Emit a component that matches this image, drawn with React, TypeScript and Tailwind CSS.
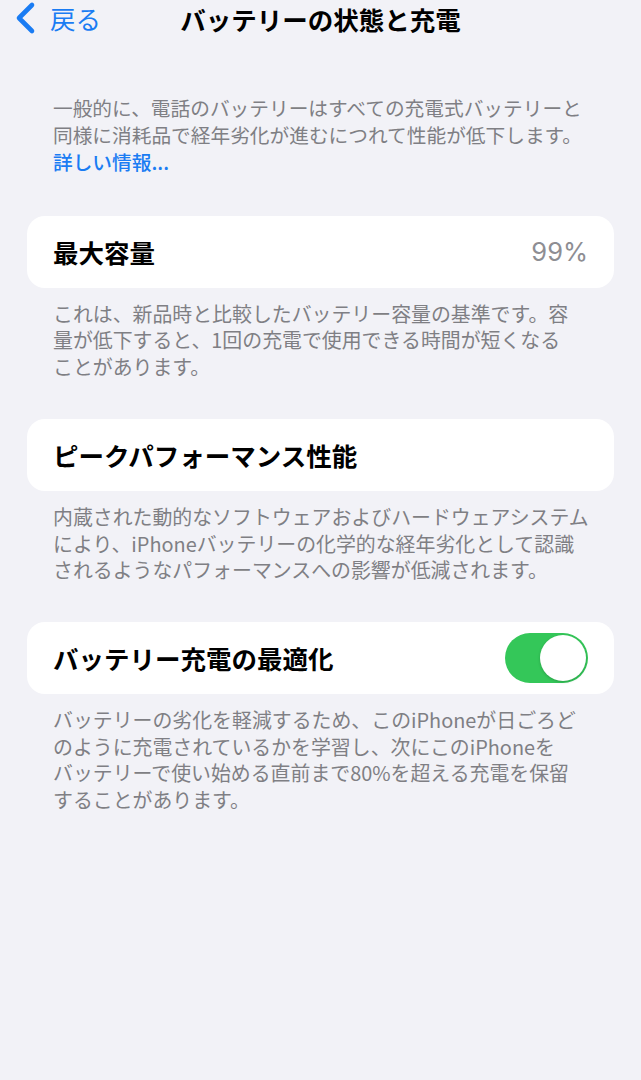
import React, { useState } from 'react';

const FONT = '"Noto Sans CJK JP", "Noto Sans", sans-serif';

interface SectionProps {
    title: string;
    footer: string[];
    right?: React.ReactNode;
}

const Toggle: React.FC<{ on: boolean; onChange: () => void }> = ({ on, onChange }) => (
    <button
        onClick={onChange}
        className={`w-[83px] h-[50px] rounded-full p-[2px] flex items-center ${on ? 'bg-[#34c759] justify-end' : 'bg-[#e5e5ea] justify-start'}`}
    >
        <span className="block w-[46px] h-[46px] rounded-full bg-white shadow-[0_1px_3px_rgba(0,0,0,0.2)]" />
    </button>
);

const Section: React.FC<SectionProps> = ({ title, footer, right }) => (
    <div className="mx-[27px]">
        <div className="h-[72px] bg-white rounded-[18px] pl-[26px] pr-[26px] flex items-center justify-between">
            <span className="text-[25.5px] font-bold text-black">{title}</span>
            {right}
        </div>
        <div className="mt-[13px] px-[26px] text-[19.9px] leading-[26.4px] text-[#7f7f84]">
            {footer.map((line) => (
                <div key={line} className="whitespace-nowrap">{line}</div>
            ))}
        </div>
    </div>
);

export default function App() {
    const [optimized, setOptimized] = useState(true);

    return (
        <div className="w-[641px] h-[1080px] bg-[#f2f2f7] overflow-hidden" style={{ fontFamily: FONT }}>
            {/* navigation bar */}
            <div className="relative h-[38px] flex items-center justify-center">
                <div className="absolute left-[13px] top-[1px] flex items-center gap-[13px] text-[#1a7cf3]">
                    <svg width="24" height="34" viewBox="0 0 24 34" fill="none">
                        <path d="M19 4L6 17L19 30" stroke="currentColor" strokeWidth="4.6" strokeLinecap="round" strokeLinejoin="round" />
                    </svg>
                    <span className="text-[25.5px] leading-none">戻る</span>
                </div>
                <h1 className="text-[25.5px] font-bold text-black">バッテリーの状態と充電</h1>
            </div>

            <div className="mt-[56px] px-[53px] text-[19.7px] leading-[27px] text-[#7f7f84]">
                <div className="whitespace-nowrap">一般的に、電話のバッテリーはすべての充電式バッテリーと</div>
                <div className="whitespace-nowrap">同様に消耗品で経年劣化が進むにつれて性能が低下します。</div>
                <div className="text-[#1a7cf3] font-medium">詳しい情報...</div>
            </div>

            <div className="mt-[41px] flex flex-col gap-[39px]">
                <Section
                    title="最大容量"
                    right={<span className="text-[25.5px] text-[#8e8e93]" style={{ fontFamily: '"Inter", sans-serif' }}>99%</span>}
                    footer={[
                        'これは、新品時と比較したバッテリー容量の基準です。容',
                        '量が低下すると、1回の充電で使用できる時間が短くなる',
                        'ことがあります。',
                    ]}
                />
                <Section
                    title="ピークパフォーマンス性能"
                    footer={[
                        '内蔵された動的なソフトウェアおよびハードウェアシステム',
                        'により、iPhoneバッテリーの化学的な経年劣化として認識',
                        'されるようなパフォーマンスへの影響が低減されます。',
                    ]}
                />
                <Section
                    title="バッテリー充電の最適化"
                    right={<Toggle on={optimized} onChange={() => setOptimized(!optimized)} />}
                    footer={[
                        'バッテリーの劣化を軽減するため、このiPhoneが日ごろど',
                        'のように充電されているかを学習し、次にこのiPhoneを',
                        'バッテリーで使い始める直前まで80%を超える充電を保留',
                        'することがあります。',
                    ]}
                />
            </div>
        </div>
    );
}
